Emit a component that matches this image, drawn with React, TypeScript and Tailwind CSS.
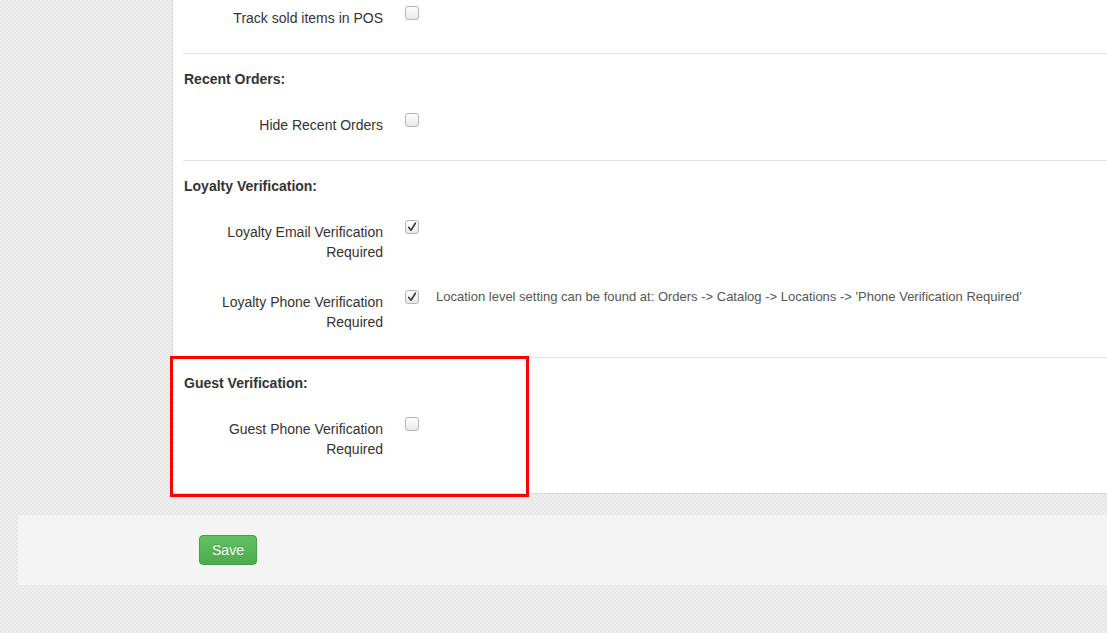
import React from "react";

const font = { fontFamily: '"Liberation Sans", Arial, sans-serif' };

function Checkbox({ checked }: { checked?: boolean }) {
  return (
    <span className="mt-[-2px] flex h-[14px] w-[14px] shrink-0 items-center justify-center rounded-[3px] border border-[#b5b5b5] bg-gradient-to-b from-[#fdfdfd] to-[#e9e9e9]">
      {checked && (
        <svg width="10" height="10" viewBox="0 0 10 10">
          <path d="M1.8 5.4 L4 8.2 L8.4 1.2" fill="none" stroke="#3a3a3a" strokeWidth="1.6" strokeLinecap="round" strokeLinejoin="round" />
        </svg>
      )}
    </span>
  );
}

function Row({ label, checked, help, className = "" }: { label: React.ReactNode; checked?: boolean; help?: string; className?: string }) {
  return (
    <div className={`flex items-start ${className}`}>
      <div className="w-[200px] shrink-0 text-right leading-5 text-[#333]">{label}</div>
      <div className="ml-[22px]">
        <Checkbox checked={checked} />
      </div>
      {help && <div className="ml-[17px] mt-[-4px] text-[13px] leading-[18px] text-[#555]">{help}</div>}
    </div>
  );
}

function Heading({ children }: { children: React.ReactNode }) {
  return <div className="pl-px text-sm font-bold leading-5 text-[#333]">{children}</div>;
}

export default function App() {
  return (
    <div
      className="min-h-[633px] w-full overflow-hidden bg-[#ebebeb] bg-[image:repeating-conic-gradient(#e6e6e6_0%_25%,#efefef_0%_50%)] bg-[length:4px_4px] text-sm"
      style={font}
    >
      <div className="ml-[172px] border-b border-l border-[#dcdcdc] bg-white pl-[10px]">
        <section className="pb-[25px] pt-[8px]">
          <Row label="Track sold items in POS" />
        </section>

        <section className="border-t border-[#e3e3e3] pb-[25px] pt-[15px]">
          <Heading>Recent Orders:</Heading>
          <Row className="mt-[26px]" label="Hide Recent Orders" />
        </section>

        <section className="border-t border-[#e3e3e3] pb-[25px] pt-[15px]">
          <Heading>Loyalty Verification:</Heading>
          <Row className="mt-[26px]" checked label={<>Loyalty Email Verification<br />Required</>} />
          <Row
            className="mt-[30px]"
            checked
            label={<>Loyalty Phone Verification<br />Required</>}
            help="Location level setting can be found at: Orders -> Catalog -> Locations -> 'Phone Verification Required'"
          />
        </section>

        <section className="relative border-t border-[#e3e3e3] pb-[34px] pt-[15px]">
          <Heading>Guest Verification:</Heading>
          <Row className="mt-[26px]" label={<>Guest Phone Verification<br />Required</>} />
          <div className="pointer-events-none absolute left-[-13px] top-[-2px] z-10 h-[141px] w-[359px] border-[3px] border-[#ff0000]" />
        </section>
      </div>

      <div className="ml-[18px] mt-[21px] flex h-[70px] items-center bg-[#f4f4f4] pl-[181px]">
        <button className="h-[30px] w-[58px] rounded-[4px] border border-[#4a9e4a] bg-gradient-to-b from-[#62c162] to-[#4cac4c] text-sm text-white [text-shadow:0_-1px_0_rgba(0,0,0,0.2)]">
          Save
        </button>
      </div>
    </div>
  );
}
